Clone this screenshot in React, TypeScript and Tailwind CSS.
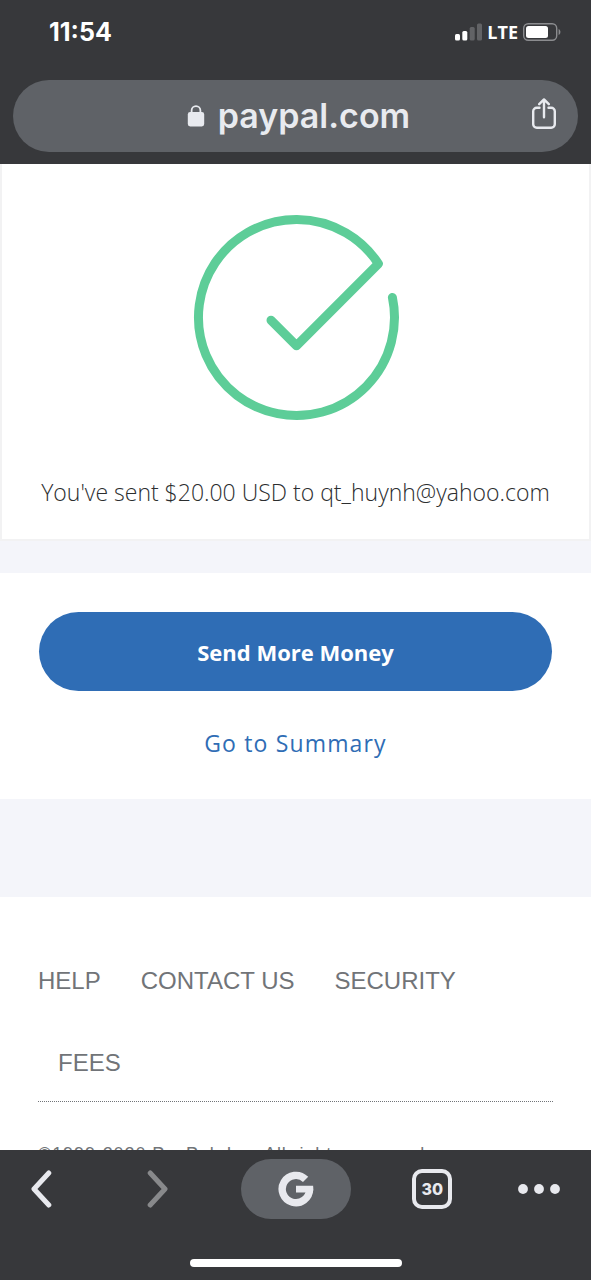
import type { ReactNode } from "react"

const footerLinks = ["Help", "Contact Us", "Security", "Fees"]

function StatusBar() {
  return (
    <div className="flex h-16 items-center justify-between pl-[49px] pr-[30px] font-['Inter',sans-serif] font-bold text-white">
      <span className="text-[25px] leading-6">11:54</span>
      <div className="flex items-center gap-[5px]">
        <svg className="h-[18px] w-7" viewBox="0 0 28 18" fill="currentColor" aria-hidden="true">
          <rect x="1" y="11" width="5" height="6.5" rx="1.5" />
          <rect x="8.3" y="8" width="5" height="9.5" rx="1.5" />
          <rect x="15.7" y="4" width="5" height="13.5" rx="1.5" opacity="0.22" />
          <rect x="23" y="0.5" width="5" height="17" rx="1.5" opacity="0.22" />
        </svg>
        <span className="font-['Open_Sans',sans-serif] text-lg leading-6">LTE</span>
        <svg className="h-[18px] w-[38px]" viewBox="0 0 38 18" aria-hidden="true">
          <rect x="0.7" y="0.7" width="33" height="16.6" rx="4.5" fill="none" stroke="#8b8c8f" strokeWidth="1.4" />
          <rect x="3" y="3" width="22" height="12" rx="2.5" fill="#fff" />
          <path d="M35.6 6c2.4 1 2.4 5 0 6z" fill="#8b8c8f" />
        </svg>
      </div>
    </div>
  )
}

function AddressBar() {
  return (
    <div className="mx-[13px] mt-4 grid h-[72px] grid-cols-[1fr_auto_1fr] items-center rounded-full bg-[#5f6267] text-[#e8eaef]">
      <span />
      <div className="flex items-center gap-[13px] pl-1.5">
        <svg className="h-[22px] w-[18px]" viewBox="0 0 18 22" aria-hidden="true">
          <path d="M4.6 8V5.6a4.4 4.4 0 0 1 8.8 0V8" fill="none" stroke="currentColor" strokeWidth="1.8" />
          <rect x="0.8" y="7" width="16.4" height="14.4" rx="2.4" fill="currentColor" />
        </svg>
        <span className="font-['Inter',sans-serif] text-[34px] font-semibold leading-10">paypal.com</span>
      </div>
      <button type="button" aria-label="Share" className="mb-1 mr-[22px] justify-self-end">
        <svg
          className="h-8 w-6"
          viewBox="0 0 24 32"
          fill="none"
          stroke="currentColor"
          strokeWidth="2.4"
          strokeLinecap="round"
          strokeLinejoin="round"
        >
          <path d="M7.5 9.7H4.8a3.6 3.6 0 0 0-3.6 3.6v12.9a3.6 3.6 0 0 0 3.6 3.6h14.4a3.6 3.6 0 0 0 3.6-3.6V13.3a3.6 3.6 0 0 0-3.6-3.6h-2.7" />
          <path d="M12 19.3V1.8M7.2 6.2 12 1.4l4.8 4.8" />
        </svg>
      </button>
    </div>
  )
}

function NavButton({ label, className, children }: { label: string; className: string; children: ReactNode }) {
  return (
    <button type="button" aria-label={label} className={`flex h-[60px] items-center ${className}`}>
      {children}
    </button>
  )
}

function BottomBar() {
  return (
    <footer className="flex h-[130px] flex-none flex-col items-center justify-between bg-[#37383b] pb-[13px] pt-[9px] text-[#e8e9ee]">
      <nav className="flex w-full items-center justify-between px-[31px]">
        <NavButton label="Back" className="w-[54px] justify-start">
          <svg className="h-[38px] w-[21px]" viewBox="0 0 21 38" fill="none" stroke="currentColor" strokeWidth="5" strokeLinecap="round" strokeLinejoin="round">
            <path d="M17.8 3 3 19l14.8 16" />
          </svg>
        </NavButton>
        <NavButton label="Forward" className="w-8 justify-start text-[#88898b]">
          <svg className="h-[38px] w-[21px]" viewBox="0 0 21 38" fill="none" stroke="currentColor" strokeWidth="5" strokeLinecap="round" strokeLinejoin="round">
            <path d="M3.2 3 18 19 3.2 35" />
          </svg>
        </NavButton>
        <NavButton label="Google" className="w-[110px] justify-center rounded-full bg-[#5f6267]">
          <svg className="size-9" viewBox="0 0 36 36" aria-hidden="true">
            <path d="M27.6 8.4A13.7 13.7 0 1 0 31.6 18.3" fill="none" stroke="currentColor" strokeWidth="7.4" />
            <path d="M18 14.8h17.1a17 17 0 0 1 .1 4.2l-.3 2.6H18z" fill="currentColor" />
          </svg>
        </NavButton>
        <NavButton label="Open tabs" className="w-10 justify-center">
          <span className="flex size-10 items-center justify-center rounded-[10px] border-4 border-current font-['Inter',sans-serif] text-base font-extrabold leading-5">
            30
          </span>
        </NavButton>
        <NavButton label="More" className="w-[46px] justify-end">
          <svg className="h-[10px] w-[42px]" viewBox="0 0 42 10" fill="currentColor">
            <circle cx="5" cy="5" r="4.9" />
            <circle cx="21" cy="5" r="4.9" />
            <circle cx="37" cy="5" r="4.9" />
          </svg>
        </NavButton>
      </nav>
      <div className="h-2 w-[212px] rounded-full bg-white" />
    </footer>
  )
}

export default function App() {
  return (
    <div className="flex h-screen flex-col bg-white">
      <header className="flex-none bg-[#37383b] pb-3">
        <StatusBar />
        <AddressBar />
      </header>

      <main className="min-h-0 flex-1 overflow-hidden bg-[#f4f5fa]">
        <section className="flex flex-col items-center border-x-2 border-b-2 border-[#f2f2f3] bg-white pb-[31px] pt-[50px] font-['Open_Sans',sans-serif]">
          <svg
            className="size-[208px]"
            viewBox="0 0 208 208"
            fill="none"
            stroke="#5dcd98"
            strokeWidth="9"
            strokeLinecap="round"
            strokeLinejoin="round"
            aria-hidden="true"
          >
            <path d="M200.4 83.4A98 98 0 1 1 186.4 49.7L104.5 131.7 79 106.3" />
          </svg>
          <p className="mt-[54px] text-[23px] font-light leading-8 text-[#2c2e2f]">
            You've sent $20.00 USD to qt_huynh@yahoo.com
          </p>
        </section>

        <section className="mt-8 flex flex-col items-center bg-white px-[39px] pb-10 pt-[39px] font-['Open_Sans',sans-serif]">
          <button type="button" className="h-[79px] w-full rounded-full bg-[#2f6db5] text-[22px] font-bold leading-8 text-white">
            Send More Money
          </button>
          <a href="#summary" className="mt-9 text-[23px] font-medium leading-8 tracking-wider text-[#2f6db5]">
            Go to Summary
          </a>
        </section>

        <section className="mt-[98px] bg-white px-[38px] pt-9 font-['Liberation_Sans',Arial,sans-serif] text-[#717478]">
          <ul className="flex flex-wrap border-b border-dotted border-[#717478] pb-1">
            {footerLinks.map((name) => (
              <li key={name} className="px-5 pb-[13px] pt-[27px] first:pl-0">
                <a href="#footer" className="text-2xl uppercase leading-[42px]">
                  {name}
                </a>
              </li>
            ))}
          </ul>
          <p className="mt-[38px] whitespace-nowrap pb-10 text-lg tracking-wider">
            ©1999-2020 PayPal, Inc. All rights reserved.
          </p>
        </section>
      </main>

      <BottomBar />
    </div>
  )
}
